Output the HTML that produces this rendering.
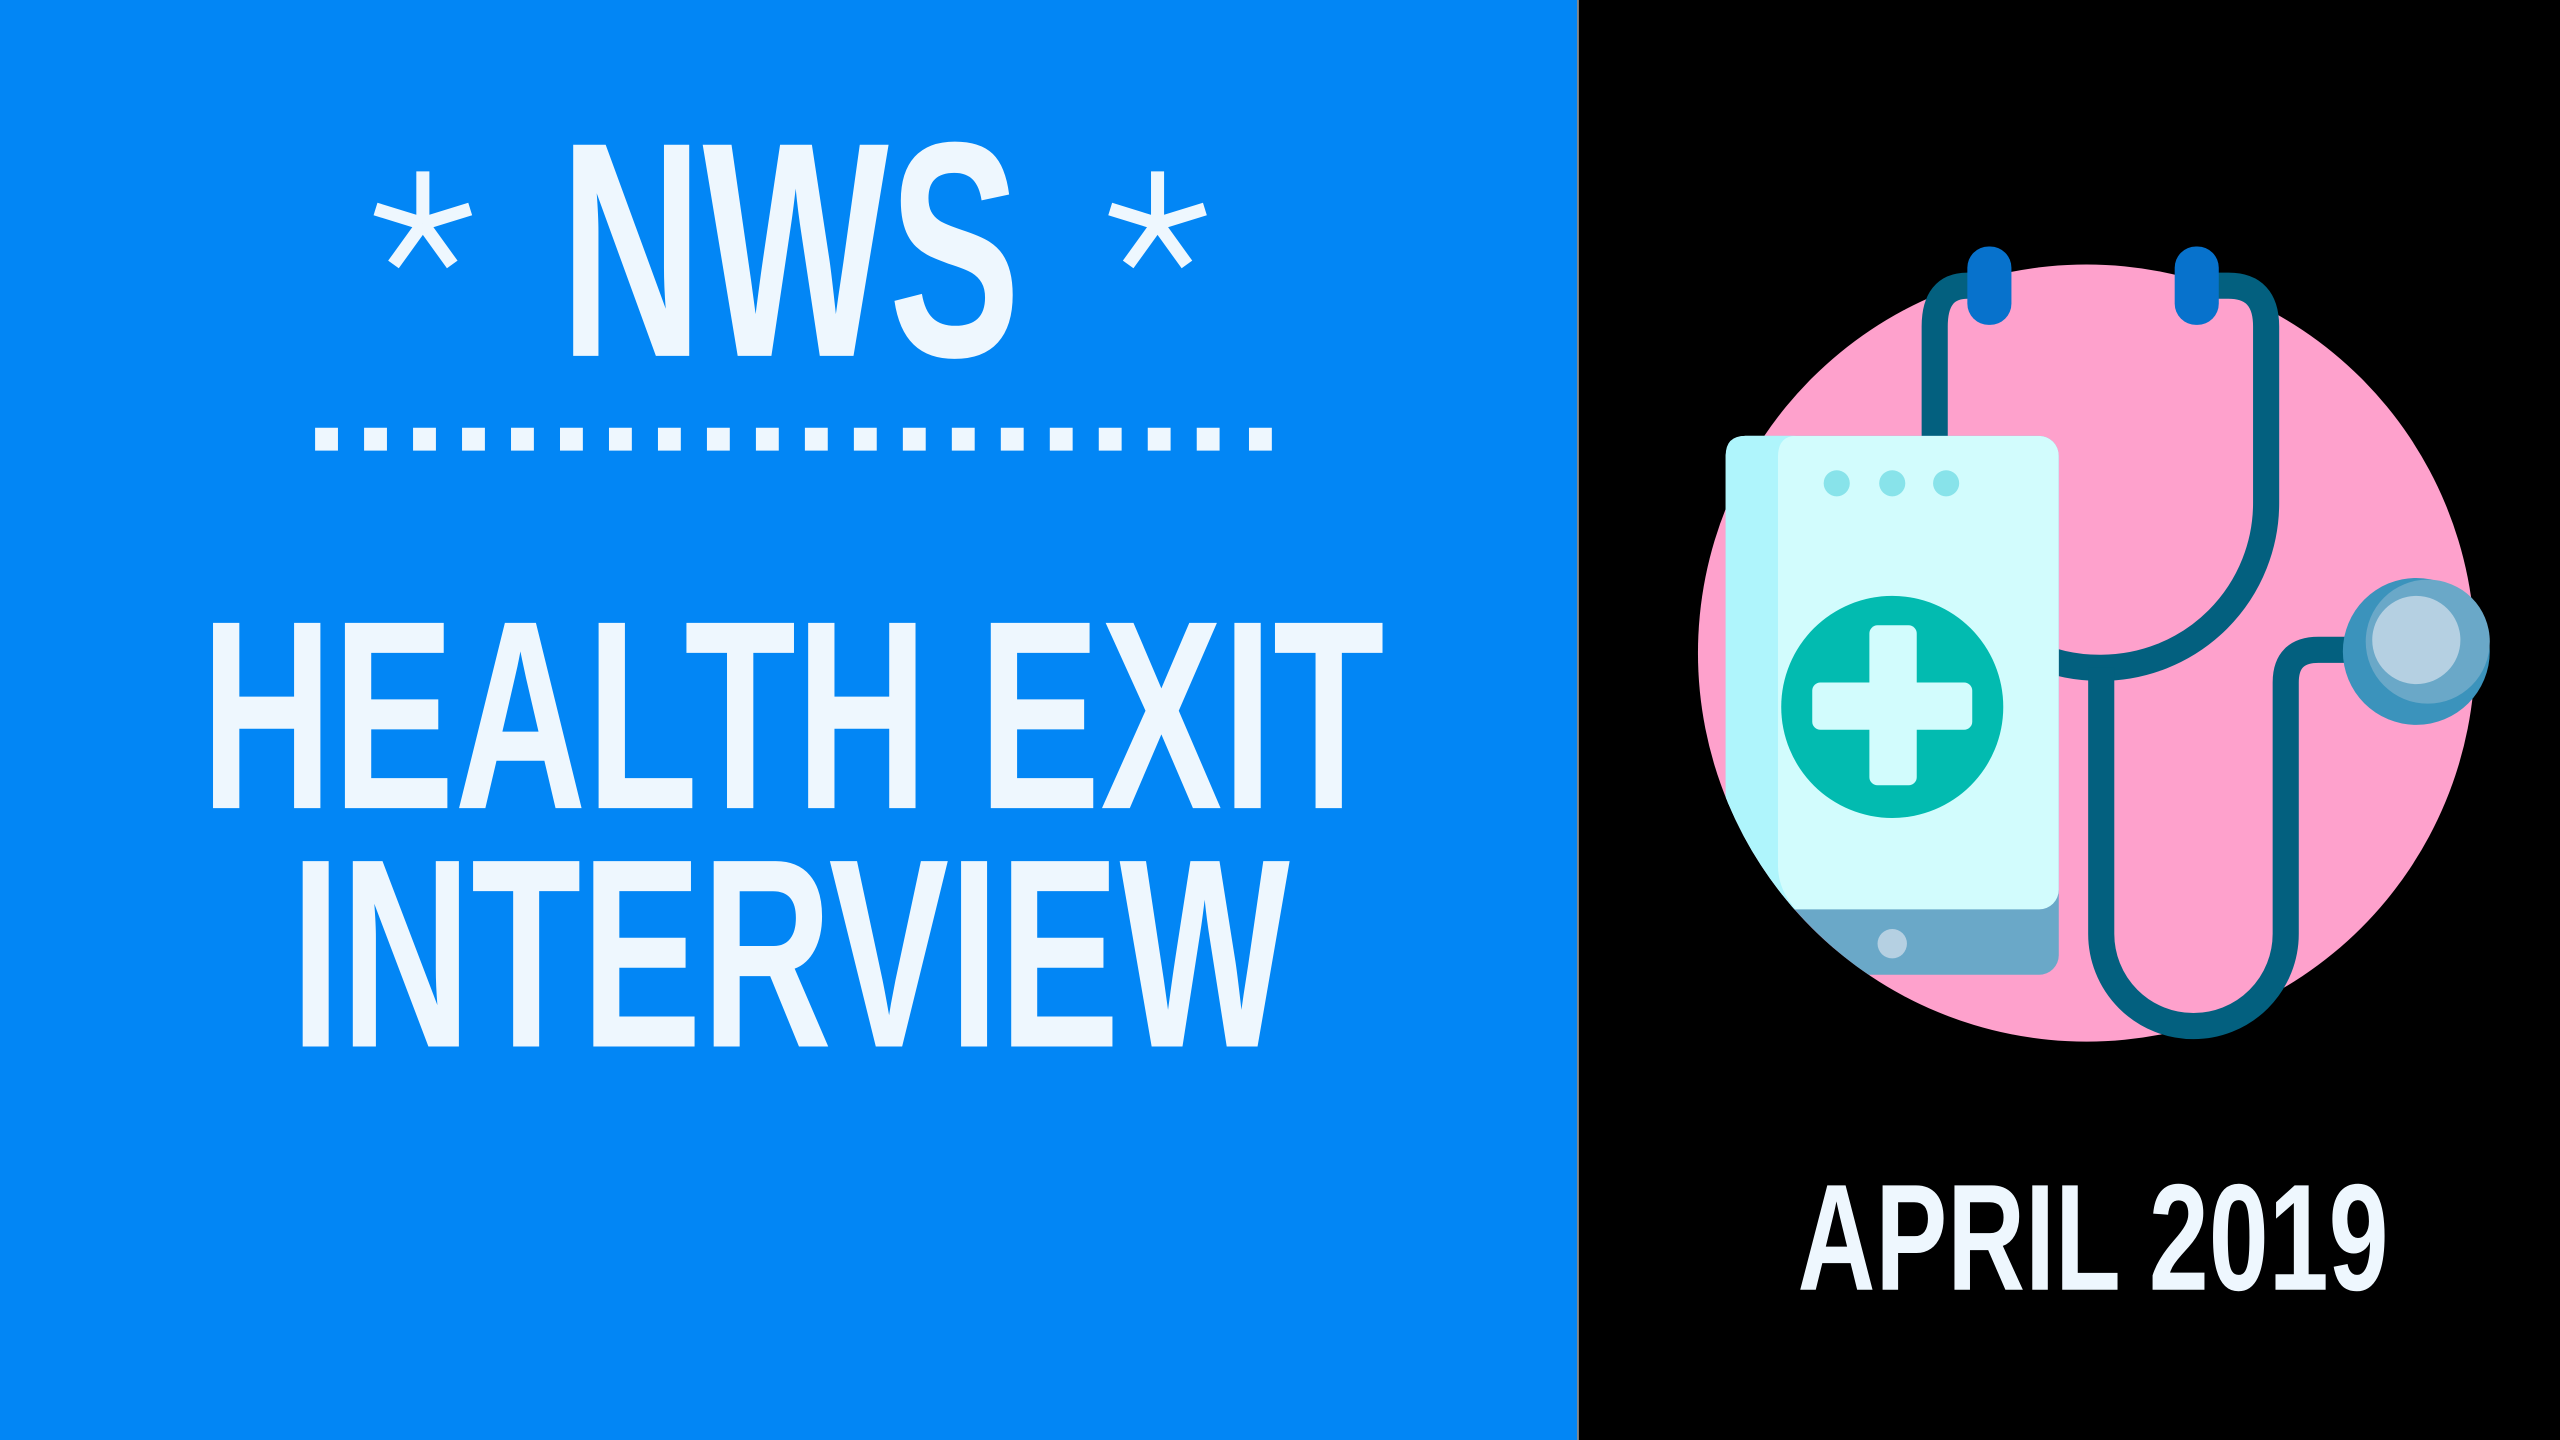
<!DOCTYPE html>
<html><head><meta charset="utf-8"><style>
html,body{margin:0;padding:0;background:#000;}
svg{display:block;}
</style></head><body>
<svg width="2560" height="1440" viewBox="0 0 1568 882" xmlns="http://www.w3.org/2000/svg">
<defs>
<clipPath id="cp">
<circle cx="1278" cy="400" r="238"/>
<rect x="1040" y="250" width="260" height="180"/>
</clipPath>
</defs>
<rect x="0" y="0" width="1568" height="882" fill="#000"/>
<rect x="0" y="0" width="966" height="882" fill="#0286f5"/>
<rect x="966" y="0" width="1" height="882" fill="#9a9a9a"/>

<g fill="#eef7fe" font-family="Liberation Sans, sans-serif" font-weight="bold">
<text x="343" y="218" font-size="188" textLength="282" lengthAdjust="spacingAndGlyphs">NWS</text>
<text x="123" y="495" font-size="165" textLength="725" lengthAdjust="spacingAndGlyphs">HEALTH EXIT</text>
<text x="178" y="641" font-size="165" textLength="612" lengthAdjust="spacingAndGlyphs">INTERVIEW</text>
<text x="1101" y="790" font-size="93" textLength="362" lengthAdjust="spacingAndGlyphs">APRIL 2019</text>
</g>

<g stroke="#eef7fe" stroke-width="8" stroke-linecap="butt">
<g transform="translate(259,137)">
<line x1="0" y1="0" x2="0" y2="-32"/><line x1="0" y1="0" x2="29" y2="-9"/><line x1="0" y1="0" x2="-29" y2="-9"/><line x1="0" y1="0" x2="18" y2="25"/><line x1="0" y1="0" x2="-18" y2="25"/>
</g>
<g transform="translate(709,137)">
<line x1="0" y1="0" x2="0" y2="-32"/><line x1="0" y1="0" x2="29" y2="-9"/><line x1="0" y1="0" x2="-29" y2="-9"/><line x1="0" y1="0" x2="18" y2="25"/><line x1="0" y1="0" x2="-18" y2="25"/>
</g>
</g>

<g fill="#eef7fe">
<rect x="193" y="262" width="14" height="14"/><rect x="223" y="262" width="14" height="14"/><rect x="253" y="262" width="14" height="14"/><rect x="283" y="262" width="14" height="14"/><rect x="313" y="262" width="14" height="14"/><rect x="343" y="262" width="14" height="14"/><rect x="373" y="262" width="14" height="14"/><rect x="403" y="262" width="14" height="14"/><rect x="433" y="262" width="14" height="14"/><rect x="463" y="262" width="14" height="14"/><rect x="493" y="262" width="14" height="14"/><rect x="523" y="262" width="14" height="14"/><rect x="553" y="262" width="14" height="14"/><rect x="583" y="262" width="14" height="14"/><rect x="613" y="262" width="14" height="14"/><rect x="643" y="262" width="14" height="14"/><rect x="673" y="262" width="14" height="14"/><rect x="703" y="262" width="14" height="14"/><rect x="733" y="262" width="14" height="14"/><rect x="765" y="262" width="14" height="14"/>
</g>

<circle cx="1278" cy="400" r="238" fill="#fea1cc"/>
<g fill="none" stroke="#03607f" stroke-width="16">
<path d="M1215 175 L1205 175 Q1185 175 1185 200 L1185 310"/>
<path d="M1345 175 L1365 175 Q1388 175 1388 200 L1388 308 A101 101 0 0 1 1287 409 A101 101 0 0 1 1240 398"/>
<path d="M1287 409 L1287 572 A56 56 0 0 0 1400 572 L1400 418 Q1400 398 1420 398 L1450 398"/>
</g>
<rect x="1205" y="151" width="27" height="48" rx="13" fill="#0772cc"/>
<rect x="1332" y="151" width="27" height="48" rx="13" fill="#0772cc"/>
<circle cx="1480" cy="399" r="45" fill="#3b93bc"/>
<circle cx="1487" cy="393" r="38" fill="#6aa8c8"/>
<circle cx="1480" cy="392" r="27" fill="#b5d0e2"/>

<g clip-path="url(#cp)">
<rect x="1057" y="267" width="204" height="330" rx="12" fill="#6aa8c8"/>
<rect x="1057" y="267" width="204" height="290" rx="12" fill="#d2fcfd"/>
<path d="M1069 267 L1100 267 Q1089 267 1089 280 L1089 530 Q1089 545 1100 557 L1069 557 Q1057 557 1057 545 L1057 279 Q1057 267 1069 267Z" fill="#aff5fc"/>
</g>
<g fill="#88e3ea"><circle cx="1125" cy="296" r="8"/><circle cx="1159" cy="296" r="8"/><circle cx="1192" cy="296" r="8"/></g>
<circle cx="1159" cy="578" r="9" fill="#b5d0e2"/>
<circle cx="1159" cy="433" r="68" fill="#02bbb0"/>
<rect x="1145" y="383" width="29" height="98" rx="5" fill="#d2fcfd"/>
<rect x="1110" y="418" width="98" height="29" rx="5" fill="#d2fcfd"/>
</svg>
</body></html>
